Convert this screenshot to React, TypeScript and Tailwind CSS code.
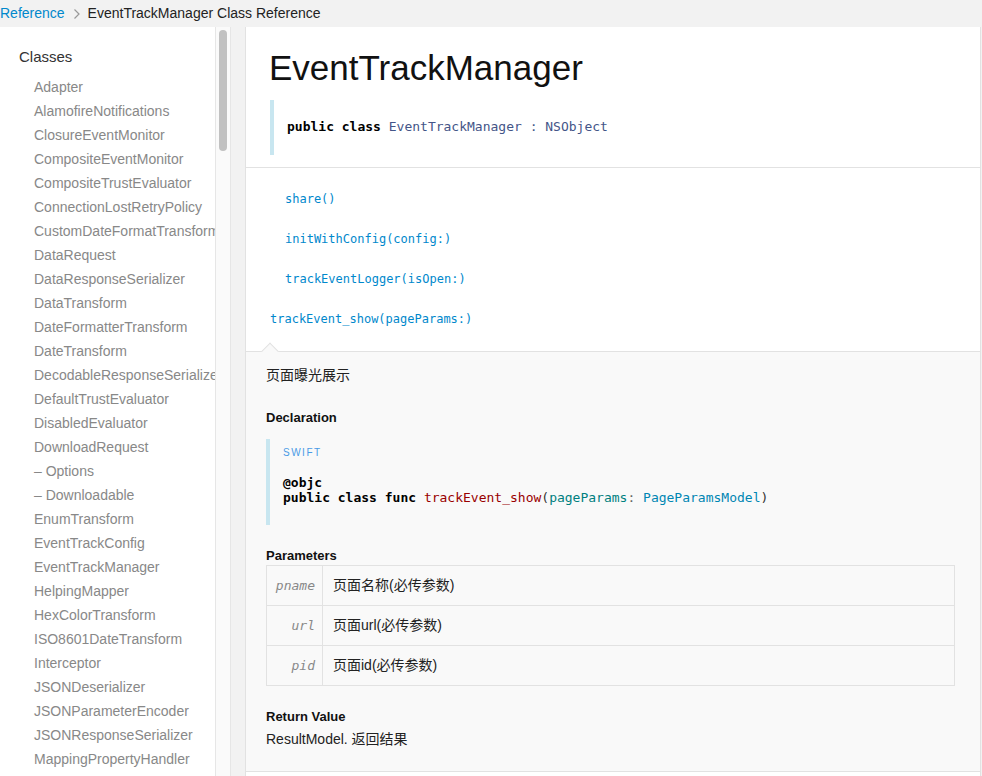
import React from "react";

const sans = "font-['Liberation_Sans','Noto_Sans_CJK_SC',sans-serif]";
const mono = "font-['DejaVu_Sans_Mono',monospace]";

const classes = [
  "Adapter",
  "AlamofireNotifications",
  "ClosureEventMonitor",
  "CompositeEventMonitor",
  "CompositeTrustEvaluator",
  "ConnectionLostRetryPolicy",
  "CustomDateFormatTransform",
  "DataRequest",
  "DataResponseSerializer",
  "DataTransform",
  "DateFormatterTransform",
  "DateTransform",
  "DecodableResponseSerializer",
  "DefaultTrustEvaluator",
  "DisabledEvaluator",
  "DownloadRequest",
  "– Options",
  "– Downloadable",
  "EnumTransform",
  "EventTrackConfig",
  "EventTrackManager",
  "HelpingMapper",
  "HexColorTransform",
  "ISO8601DateTransform",
  "Interceptor",
  "JSONDeserializer",
  "JSONParameterEncoder",
  "JSONResponseSerializer",
  "MappingPropertyHandler",
];

const tasks = [
  { name: "share()", indent: true },
  { name: "initWithConfig(config:)", indent: true },
  { name: "trackEventLogger(isOpen:)", indent: true },
  { name: "trackEvent_show(pageParams:)", indent: false },
];

const params = [
  { name: "pname", desc: "页面名称(必传参数)" },
  { name: "url", desc: "页面url(必传参数)" },
  { name: "pid", desc: "页面id(必传参数)" },
];

function Breadcrumb() {
  return (
    <div className={"h-[27px] flex items-center text-[14px] bg-[#f2f2f2] " + sans}>
      <span className="text-[#0088cc]">Reference</span>
      <svg width="8" height="12" viewBox="0 0 8 12" className="ml-[8px] mr-[7px]">
        <polyline points="1.5,1.5 6,6 1.5,10.5" fill="none" stroke="#999" strokeWidth="1.2" />
      </svg>
      <span className="text-[#222]">EventTrackManager Class Reference</span>
    </div>
  );
}

function Sidebar() {
  return (
    <div className="flex h-full">
      <div className={"w-[215px] h-full bg-white overflow-hidden pt-[20px] " + sans}>
        <div className="pl-[19px] text-[15px] leading-[20px] text-[#333]">Classes</div>
        <ul className="mt-[8px]">
          {classes.map((c) => (
            <li key={c} className="pl-[34px] text-[14px] leading-[24px] text-[#888] whitespace-nowrap">
              {c}
            </li>
          ))}
        </ul>
      </div>
      <div className="w-[16px] h-full bg-[#fafafa] border-l border-r border-[#e6e6e6] pt-[3px] pl-[3px]">
        <div className="w-[8px] h-[121px] rounded-full bg-[#c1c1c1]"></div>
      </div>
    </div>
  );
}

function Main() {
  return (
    <div className={"flex-1 h-full bg-white border-l border-r border-[#e2e2e2] mr-[1px] ml-[14px] overflow-hidden " + sans}>
      <section className="pl-[24px] pt-[21px] pb-[12px] border-b border-[#e2e2e2]">
        <h1 className="ml-[-1px] text-[35px] leading-[40px] text-[#111]">EventTrackManager</h1>
        <div className="mt-[12px] border-l-4 border-[#c8e6f0] pl-[13px] pt-[18px] pb-[19px]">
          <pre className={"text-[13px] leading-[18px] " + mono}>
            <span className="font-bold text-black">public class</span>{" "}
            <span className="text-[#445588]">EventTrackManager</span>{" "}
            <span className="text-[#445588]">:</span>{" "}
            <span className="text-[#445588]">NSObject</span>
          </pre>
        </div>
      </section>

      <ul className={"pl-[24px] pt-[11px] pb-[12px] text-[12px] " + mono}>
        {tasks.map((t) => (
          <li
            key={t.name}
            className={"h-[40px] flex items-center text-[#0088cc] " + (t.indent ? "pl-[15px]" : "")}
          >
            {t.name}
          </li>
        ))}
      </ul>

      <section className="relative bg-[#f9f9f9] border-t border-b border-[#e2e2e2] pl-[20px] pr-[25px] pt-[13px] pb-[22px]">
        <div className="absolute top-[-7px] left-[18px] w-[12px] h-[12px] rotate-45 bg-[#f9f9f9] border-l border-t border-[#e2e2e2]"></div>
        <p className="text-[14px] leading-[20px] text-[#222]">页面曝光展示</p>

        <h4 className="mt-[23px] text-[13px] leading-[20px] font-bold text-[#111]">Declaration</h4>
        <div className="mt-[11px] border-l-4 border-[#c8e6f0] pl-[13px] pt-[8px] pb-[20px]">
          <p className="text-[10px] leading-[12px] tracking-[0.15em] text-[#4a9be6]">SWIFT</p>
          <pre className={"mt-[16px] text-[13px] leading-[15px] " + mono}>
            <span className="font-bold text-black">@objc</span>
            {"\n"}
            <span className="font-bold text-black">public class func</span>{" "}
            <span className="text-[#990000]">trackEvent_show</span>
            <span className="text-[#333]">(</span>
            <span className="text-[#008080]">pageParams</span>
            <span className="text-[#666]">:</span>{" "}
            <span className="text-[#0086b3]">PageParamsModel</span>
            <span className="text-[#333]">)</span>
          </pre>
        </div>

        <h4 className="mt-[22px] text-[13px] leading-[18px] font-bold text-[#111]">Parameters</h4>
        <div className="border-l border-r border-b border-[#e2e2e2]">
          {params.map((p) => (
            <div key={p.name} className="h-[40px] flex border-t border-[#e2e2e2]">
              <div className={"w-[56px] shrink-0 flex items-center justify-end pr-[7px] border-r border-[#e2e2e2] text-[13px] italic text-[#888] " + mono}>
                {p.name}
              </div>
              <div className="flex items-center pl-[10px] text-[14px] text-[#222]">{p.desc}</div>
            </div>
          ))}
        </div>

        <h4 className="mt-[22px] text-[13px] leading-[18px] font-bold text-[#111]">Return Value</h4>
        <p className="mt-[3px] text-[14px] leading-[20px] text-[#222]">ResultModel. 返回结果</p>
      </section>
    </div>
  );
}

export default function App() {
  return (
    <div className="w-full h-[776px] overflow-hidden flex flex-col bg-[#f2f2f2]">
      <Breadcrumb />
      <div className="flex-1 flex min-h-0">
        <Sidebar />
        <Main />
      </div>
    </div>
  );
}
